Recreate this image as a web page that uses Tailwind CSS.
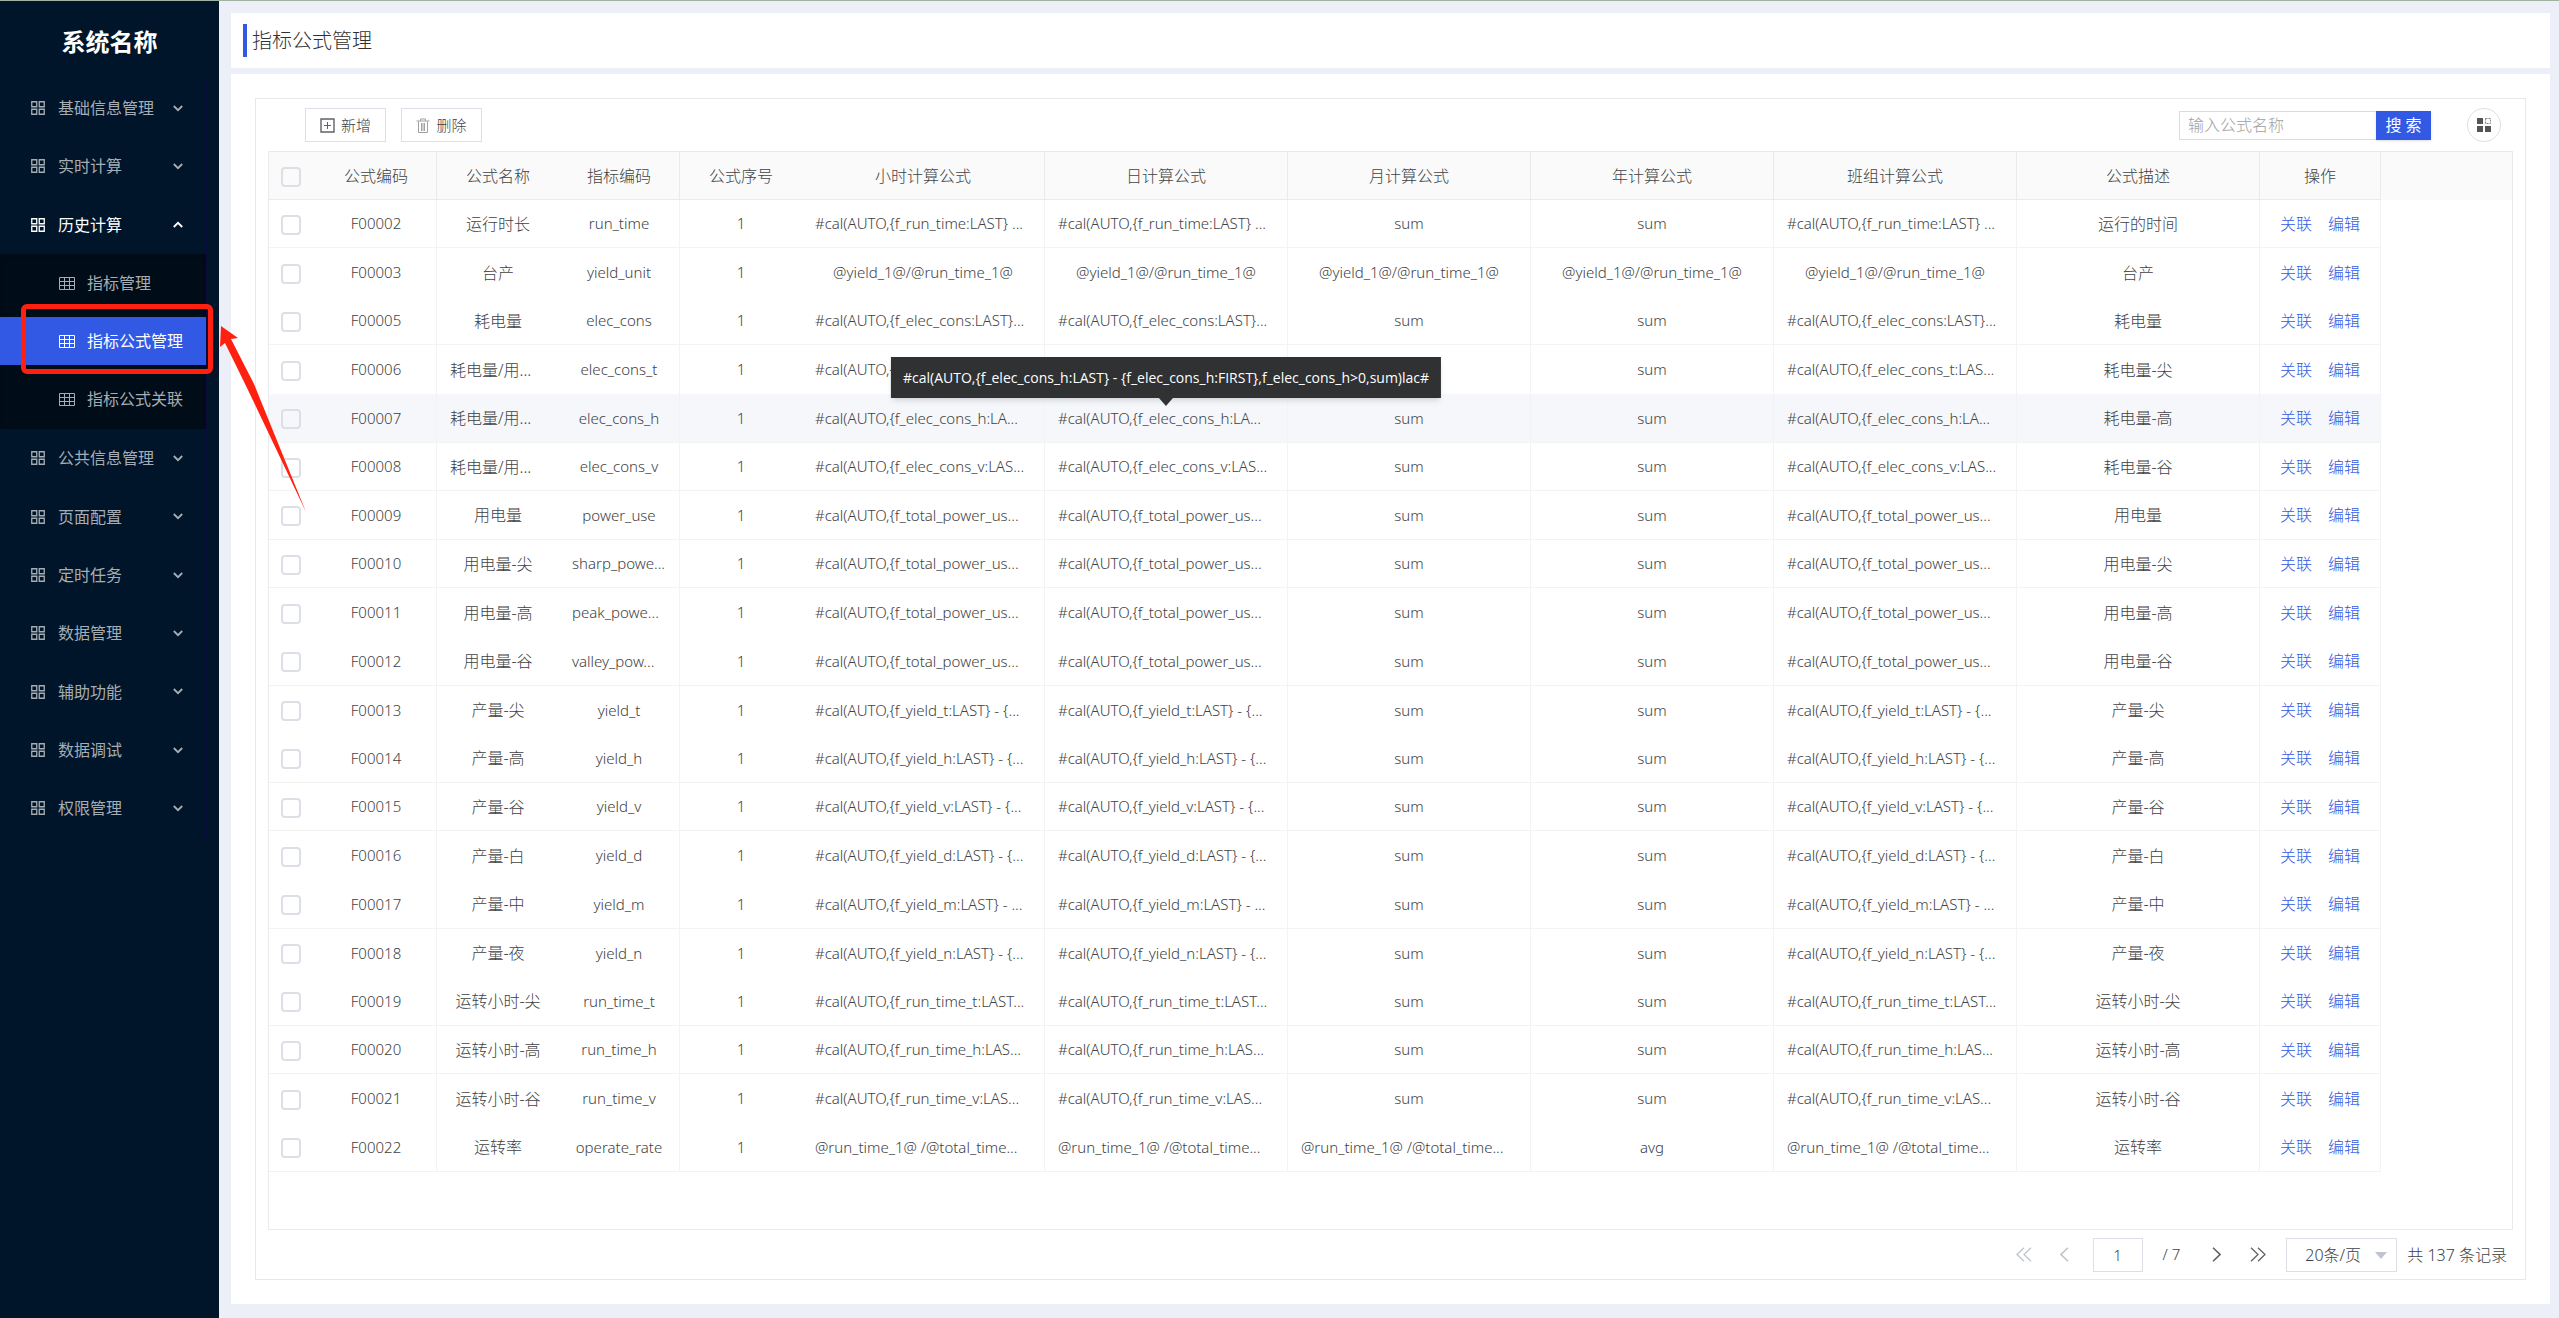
<!DOCTYPE html>
<html lang="zh-CN">
<head>
    <meta charset="utf-8">
    <title>指标公式管理</title>
    <script src="https://cdn.jsdelivr.net/npm/@tailwindcss/browser@4"></script>
</head>

<body class="font-['Noto_Sans','Noto_Sans_CJK_SC',sans-serif] text-base text-[#606266] bg-[#eceef8]">
    <!-- icons used more than once -->
    <svg class="hidden">
        <symbol id="icon-app" viewBox="0 0 14 14"><path d="M.75.75h5v5h-5zM8.25.75h5v5h-5zM.75 8.25h5v5h-5zM8.25 8.25h5v5h-5z" fill="none" stroke="currentColor" stroke-width="1.3"/></symbol>
        <symbol id="icon-table" viewBox="0 0 16 13"><path d="M.5.5h15v12H.5zM.5 4.5h15M.5 8.5h15M5.5.5v12M10.5.5v12" fill="none" stroke="currentColor"/></symbol>
        <symbol id="icon-down" viewBox="0 0 10 7"><path d="M.8 1 5 5.2 9.2 1" fill="none" stroke="currentColor" stroke-width="1.8"/></symbol>
    </svg>

    <div class="flex min-h-screen border-t border-[#9fb3a0]">
        <aside class="w-[219px] shrink-0 bg-[#001529] text-[#a6adb4]">
            <h1 class="pt-5 h-[78px] text-center text-2xl leading-[42px] font-bold text-white">系统名称</h1>
            <nav id="menu" class="w-[207px] border-r border-[#0b0a3c]"></nav>
        </aside>

        <main class="flex flex-col flex-1 min-w-0 pt-3 pl-3 pr-[9px] pb-[14px] gap-[6px]">
            <header class="flex items-center h-[55px] pl-3 bg-white">
                <span class="w-1 h-[33px] bg-[#3259e3]"></span>
                <h2 class="pl-[5px] text-xl leading-7 font-light text-[#303030]">指标公式管理</h2>
            </header>

            <section class="flex flex-1 bg-white px-6 py-6">
                <div class="flex flex-col flex-1 min-w-0 border border-[#e8e8e8] px-3 font-light text-[#404245]">
                    <div class="flex items-center h-[52px] pl-[37px] pr-3 pb-1 pt-1">
                        <button class="flex items-center justify-center gap-[6px] w-[81px] h-[34px] mr-[15px] border border-[#dcdfe6] text-[15px]">
                            <svg class="size-[15px]" viewBox="0 0 15 15" fill="none" stroke="#606266"><path d="M1 1h13v13H1z" stroke-width="1.4"/><path d="M4 7.5h7M7.5 4v7"/></svg>
                            新增
                        </button>
                        <button class="flex items-center justify-center gap-[6px] w-[81px] h-[34px] border border-[#dcdfe6] text-[15px]">
                            <svg class="w-[14px] h-[15px] text-[#a0a0a0]" viewBox="0 0 14 15" fill="none" stroke="currentColor"><path d="M.5 3h13M4.5 3V1h5v2M2.5 3.5v11h9v-11M5.5 5v8M7 5v8M8.5 5v8"/></svg>
                            删除
                        </button>
                        <form class="flex ml-auto">
                            <input class="w-[197px] h-[29px] px-2 border border-r-0 border-[#dcdcdc] placeholder:text-[#a0a0a0]" type="text" placeholder="输入公式名称" aria-label="公式名称">
                            <button class="w-[55px] h-[29px] bg-[#3259e3] text-white font-normal shadow-sm" type="button">搜 索</button>
                        </form>
                        <button class="flex items-center justify-center size-[34px] ml-9 rounded-full border border-[#dcdfe6]" aria-label="列设置">
                            <svg class="size-[14px]" viewBox="0 0 14 14"><path d="M0 0h6v6H0zM0 8h6v6H0zM8 8h6v6H8z" fill="#555"/><path d="M8.5.5h5v5h-5z" fill="none" stroke="#888" stroke-dasharray="2 1"/></svg>
                        </button>
                    </div>

                    <div class="flex-1 border border-[#e8eaec]">
                        <table class="w-full table-fixed border-separate border-spacing-0 text-center">
                            <colgroup>
                                <col class="w-[47px]"><col class="w-[121px]"><col class="w-[122px]"><col class="w-[121px]"><col class="w-[122px]">
                                <col class="w-[243px]"><col class="w-[243px]"><col class="w-[243px]"><col class="w-[243px]"><col class="w-[243px]"><col class="w-[243px]">
                                <col class="w-[121px]"><col>
                            </colgroup>
                            <thead id="head" class="bg-[#fafafa]"></thead>
                            <tbody id="rows"></tbody>
                        </table>
                    </div>

                    <div class="flex items-center justify-end h-[49px] pr-[6px]">
                        <button class="text-[#c0c4cc]" aria-label="首页"><svg class="w-4 h-[15px]" viewBox="0 0 16 15" fill="none" stroke="currentColor" stroke-width="1.3"><path d="m8 .7-7 6.8 7 6.8M15 .7 8 7.5l7 6.8"/></svg></button>
                        <button class="ml-7 text-[#c0c4cc]" aria-label="上一页"><svg class="w-[9px] h-[15px]" viewBox="0 0 9 15" fill="none" stroke="currentColor" stroke-width="1.6"><path d="M8 .7 1 7.5l7 6.8"/></svg></button>
                        <input class="w-[50px] h-[34px] ml-6 border border-[#dcdfe6] text-center text-[15px]" type="text" value="1" aria-label="页码">
                        <span class="ml-5 text-[15px]">/ 7</span>
                        <button class="ml-8 text-[#606266]" aria-label="下一页"><svg class="w-[9px] h-[15px]" viewBox="0 0 9 15" fill="none" stroke="currentColor" stroke-width="1.6"><path d="m1 .7 7 6.8-7 6.8"/></svg></button>
                        <button class="ml-[29px] text-[#606266]" aria-label="末页"><svg class="w-4 h-[15px]" viewBox="0 0 16 15" fill="none" stroke="currentColor" stroke-width="1.3"><path d="m1 .7 7 6.8-7 6.8M8 .7l7 6.8-7 6.8"/></svg></button>
                        <div class="relative ml-5">
                            <select class="appearance-none w-[111px] h-[34px] pl-[18px] border border-[#dcdfe6] text-base" aria-label="每页条数"><option>20条/页</option></select>
                            <span class="absolute right-[10px] top-[14px] border-x-6 border-t-7 border-x-transparent border-t-[#c0c4cc] pointer-events-none"></span>
                        </div>
                        <span class="ml-[10px]">共 137 条记录</span>
                    </div>
                </div>
            </section>
        </main>
    </div>

    <!-- annotation over the menu -->
    <div class="absolute left-[21px] top-[304px] w-[192px] h-[70px] border-5 border-[#ff2010] rounded-md"></div>
    <svg class="absolute left-[218px] top-[325px] w-[90px] h-[190px]" viewBox="0 0 90 190"><path d="M3 1 20 13l-7 1 23 45 52 128-58-122L7 18l-5 4z" fill="#ff2010"/></svg>

    <script>
        const menus = ['基础信息管理', '实时计算', '历史计算', '公共信息管理', '页面配置', '定时任务', '数据管理', '辅助功能', '数据调试', '权限管理']
        const subMenus = ['指标管理', '指标公式管理', '指标公式关联']
        const tip = '#cal(AUTO,{f_elec_cons_h:LAST} - {f_elec_cons_h:FIRST},f_elec_cons_h>0,sum)lac#'

        function subMenu() {
            return `<div class="pb-px bg-[#000c17] inset-shadow-sm">` + subMenus.map(name => {
                const on = name === '指标公式管理'
                return `<div class="py-[5px]"><a href="#" class="flex items-center h-12 pl-[59px] gap-3 ${on ? 'bg-[#3259e3] text-white' : ''}">
                    <svg class="w-4 h-[13px]"><use href="#icon-table"/></svg>${name}</a></div>`
            }).join('') + `</div>`
        }

        document.getElementById('menu').innerHTML = menus.map(name => {
            const open = name === '历史计算'
            return `<button class="flex items-center w-full h-[58px] nth-[3n]:h-[59px] pl-[31px] pr-[23px] ${open ? 'text-white' : ''}">
                <svg class="size-[14px] mr-[13px]"><use href="#icon-app"/></svg>${name}
                <svg class="w-[10px] h-[7px] ml-auto ${open ? 'rotate-180' : ''}"><use href="#icon-down"/></svg>
            </button>` + (open ? subMenu() : '')
        }).join('')

        const heads = ['公式编码', '公式名称', '指标编码', '公式序号', '小时计算公式', '日计算公式', '月计算公式', '年计算公式', '班组计算公式', '公式描述', '操作']
        // [code, name, index code, hour/day/shift formula, month, year, description]
        const data = [
            ['F00002', '运行时长', 'run_time', '#cal(AUTO,{f_run_time:LAST} ...', 'sum', 'sum', '运行的时间'],
            ['F00003', '台产', 'yield_unit', '@yield_1@/@run_time_1@', '@yield_1@/@run_time_1@', '@yield_1@/@run_time_1@', '台产'],
            ['F00005', '耗电量', 'elec_cons', '#cal(AUTO,{f_elec_cons:LAST}...', 'sum', 'sum', '耗电量'],
            ['F00006', '耗电量/用...', 'elec_cons_t', '#cal(AUTO,{f_elec_cons_t:LAS...', 'sum', 'sum', '耗电量-尖'],
            ['F00007', '耗电量/用...', 'elec_cons_h', '#cal(AUTO,{f_elec_cons_h:LA...', 'sum', 'sum', '耗电量-高'],
            ['F00008', '耗电量/用...', 'elec_cons_v', '#cal(AUTO,{f_elec_cons_v:LAS...', 'sum', 'sum', '耗电量-谷'],
            ['F00009', '用电量', 'power_use', '#cal(AUTO,{f_total_power_us...', 'sum', 'sum', '用电量'],
            ['F00010', '用电量-尖', 'sharp_powe...', '#cal(AUTO,{f_total_power_us...', 'sum', 'sum', '用电量-尖'],
            ['F00011', '用电量-高', 'peak_powe...', '#cal(AUTO,{f_total_power_us...', 'sum', 'sum', '用电量-高'],
            ['F00012', '用电量-谷', 'valley_pow...', '#cal(AUTO,{f_total_power_us...', 'sum', 'sum', '用电量-谷'],
            ['F00013', '产量-尖', 'yield_t', '#cal(AUTO,{f_yield_t:LAST} - {...', 'sum', 'sum', '产量-尖'],
            ['F00014', '产量-高', 'yield_h', '#cal(AUTO,{f_yield_h:LAST} - {...', 'sum', 'sum', '产量-高'],
            ['F00015', '产量-谷', 'yield_v', '#cal(AUTO,{f_yield_v:LAST} - {...', 'sum', 'sum', '产量-谷'],
            ['F00016', '产量-白', 'yield_d', '#cal(AUTO,{f_yield_d:LAST} - {...', 'sum', 'sum', '产量-白'],
            ['F00017', '产量-中', 'yield_m', '#cal(AUTO,{f_yield_m:LAST} - ...', 'sum', 'sum', '产量-中'],
            ['F00018', '产量-夜', 'yield_n', '#cal(AUTO,{f_yield_n:LAST} - {...', 'sum', 'sum', '产量-夜'],
            ['F00019', '运转小时-尖', 'run_time_t', '#cal(AUTO,{f_run_time_t:LAST...', 'sum', 'sum', '运转小时-尖'],
            ['F00020', '运转小时-高', 'run_time_h', '#cal(AUTO,{f_run_time_h:LAS...', 'sum', 'sum', '运转小时-高'],
            ['F00021', '运转小时-谷', 'run_time_v', '#cal(AUTO,{f_run_time_v:LAS...', 'sum', 'sum', '运转小时-谷'],
            ['F00022', '运转率', 'operate_rate', '@run_time_1@ /@total_time...', '@run_time_1@ /@total_time...', 'avg', '运转率']
        ]

        const check = label => `<input type="checkbox" aria-label="${label}" class="block ml-3 mt-[2px] appearance-none size-5 border-2 border-[#dcdfe6] rounded-sm">`
        // columns without a divider on their right, rows without one below
        const open = [0, 2, 4]
        const openRows = ['F00003', 'F00006', 'F00011', 'F00013', 'F00016', 'F00018', 'F00021']
        const line = i => open.includes(i) ? '' : 'border-r'

        document.getElementById('head').innerHTML = `<tr class="h-12">
            <th class="border-b border-[#e8eaec]">${check('全选')}</th>
            ${heads.map((h, i) => `<th class="font-light border-b border-[#e8eaec] ${line(i + 1)}">${h}</th>`).join('')}<th></th></tr>`

        document.getElementById('rows').innerHTML = data.map(r => {
            const active = r[0] === 'F00007'
            const [code, name, index, formula, month, year, desc] = r
            const cells = [code, name, index, 1, formula, formula, month, year, formula, desc]
            const style = (active ? 'bg-[#f5f7fa] ' : '') + (openRows.includes(code) ? 'border-[#f3f3f3]' : 'border-b border-[#f3f3f3]')
            return `<tr class="h-[49px] nth-[5n+1]:h-12 nth-[5n+3]:h-12">
                <td class="${style}">${check(code)}</td>
                ${cells.map((c, i) => {
                    const size = i === 1 || i === 9 ? 'text-base' : 'text-[15px]'
                    const align = String(c).endsWith('...') ? 'text-left pl-[13px]' : ''
                    return `<td class="relative whitespace-nowrap ${size} ${align} ${line(i + 1)} ${style}">${c}${active && i === 5 ? tooltip() : ''}</td>`
                }).join('')}
                <td class="border-r text-[#3259e3] ${style}"><a href="#" class="mr-4">关联</a><a href="#">编辑</a></td>
                <td></td></tr>`
        }).join('')

        function tooltip() {
            return `<div role="tooltip" class="absolute z-10 left-1/2 -translate-x-1/2 bottom-11 px-3 h-[41px] leading-[41px] font-['Open_Sans'] bg-[#303133] text-white text-sm font-normal shadow-md">
                ${tip}<span class="absolute left-1/2 -ml-[7px] -bottom-2 border-x-7 border-t-8 border-x-transparent border-t-[#303133]"></span></div>`
        }
    </script>
</body>
</html>
